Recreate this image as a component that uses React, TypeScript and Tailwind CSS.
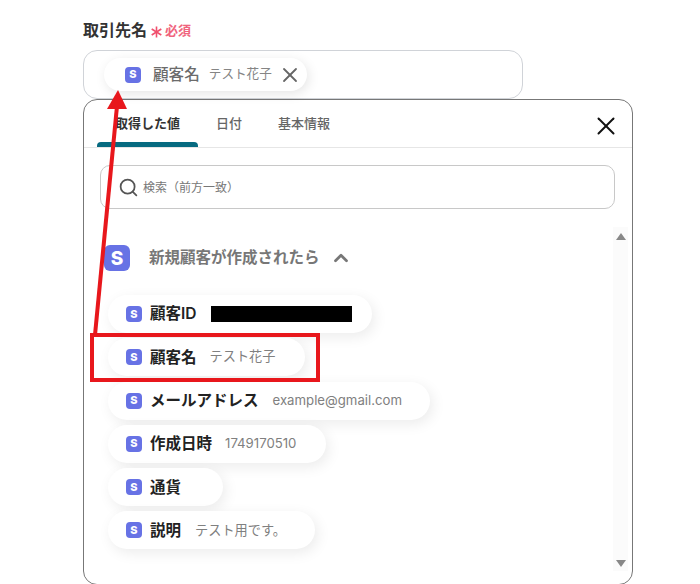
import { ChevronUp, Search, X } from "lucide-react";

const SBadge = ({ size = "small" }: { size?: "small" | "large" }) => {
  if (size === "large") {
    return (
      <span className="flex h-[26px] w-[26px] shrink-0 items-center justify-center rounded-[6px] bg-[#6772e5] text-[19px] font-extrabold leading-none text-white">
        S
      </span>
    );
  }
  return (
    <span className="flex h-4 w-4 shrink-0 items-center justify-center rounded-[4px] bg-[#6772e5] text-[11px] font-extrabold leading-none text-white">
      S
    </span>
  );
};

const rows = [
  { name: "顧客ID", width: "w-[264px]", gap: "ml-0" },
  { name: "顧客名", value: "テスト花子", width: "w-[197px]", gap: "ml-[13px]" },
  { name: "メールアドレス", value: "example@gmail.com", width: "w-[322px]", gap: "ml-[14px]" },
  { name: "作成日時", value: "1749170510", width: "w-[218px]", gap: "ml-[13px]" },
  { name: "通貨", width: "w-[115px]", gap: "ml-0" },
  { name: "説明", value: "テスト用です。", width: "w-[207px]", gap: "ml-[14px]" },
];

const App = () => {
  return (
    <div className="relative h-[584px] w-[700px] overflow-hidden bg-white pl-[83px] font-['Inter','Noto_Sans_CJK_JP',sans-serif] text-[#222]">
      <div className="flex h-[50px] items-start pt-[20px]">
        <span className="text-[16px] font-semibold leading-[20px] text-[#333]">取引先名</span>
        <svg className="ml-[4px] mt-[6px]" width="11" height="12" viewBox="0 0 11 12" stroke="#f0506e" strokeWidth="1.6">
          <line x1="5.5" y1="0.5" x2="5.5" y2="11.5" />
          <line x1="0.7" y1="3" x2="10.3" y2="9" />
          <line x1="10.3" y1="3" x2="0.7" y2="9" />
        </svg>
        <span className="ml-[3px] text-[13px] font-semibold leading-[20px] text-[#f0647d]">必須</span>
      </div>

      <div className="flex h-[49px] w-[440px] items-center rounded-[14px] border border-[#d0d3d8] pl-5">
        <div className="flex h-[33px] w-[203px] items-center rounded-full bg-white pl-[21px] shadow-[2px_3px_12px_rgba(0,0,0,0.1)]">
          <SBadge />
          <span className="ml-[12px] text-[15.6px] font-medium text-[#6b6b6b]">顧客名</span>
          <span className="ml-[9px] text-[12.6px] text-[#858585]">テスト花子</span>
          <X className="ml-[6px] h-[24px] w-[24px] shrink-0 text-[#666]" strokeWidth={1.8} />
        </div>
      </div>

      <div className="h-[486px] w-[550px] rounded-[14px] border border-[#777] bg-white">
        <div className="flex h-[48px] items-stretch border-b border-[#e6e6e6] pl-[13px] pr-[11px]">
          <div className="relative flex w-[101px] items-center justify-center text-[13px] font-semibold text-[#333]">
            取得した値
            <span className="absolute inset-x-0 bottom-0 h-[5px] rounded-t-[4px] bg-[#066a80]" />
          </div>
          <div className="ml-[18px] flex items-center text-[13px] font-medium text-[#666]">日付</div>
          <div className="ml-[36px] flex items-center text-[13px] font-medium text-[#666]">基本情報</div>
          <X className="ml-auto mt-[11px] h-[30px] w-[30px] text-[#111]" strokeWidth={1.6} />
        </div>

        <div className="ml-4 mt-[17px] flex h-[44px] w-[515px] items-center rounded-[10px] border border-[#c8c8c8] pl-[17px]">
          <Search className="h-[21px] w-[21px] shrink-0 text-[#555]" strokeWidth={2} />
          <span className="ml-[4px] pt-[1px] text-[12px] text-[#777]">検索（前方一致）</span>
        </div>

        <div className="relative">
          <div className="pl-[20px] pt-[36px]">
            <div className="flex h-[26px] items-center">
              <SBadge size="large" />
              <span className="ml-[19px] text-[15.5px] font-semibold text-[#777]">新規顧客が作成されたら</span>
              <ChevronUp className="ml-[10px] h-[22px] w-[22px] text-[#777]" strokeWidth={3} />
            </div>
            <div className="ml-[4px] mt-[24px] flex flex-col gap-[5.3px]">
              {rows.map((row) => (
                <div
                  key={row.name}
                  className={`flex h-[38px] items-center rounded-full bg-white pl-[18px] shadow-[3px_4px_14px_rgba(0,0,0,0.08)] ${row.width}`}
                >
                  <SBadge />
                  <span className="ml-[8px] text-[15.5px] font-semibold text-[#222]">{row.name}</span>
                  {row.value && <span className={`text-[13.2px] text-[#808080] ${row.gap}`}>{row.value}</span>}
                  {row.name === "顧客ID" && <span className="ml-[14px] h-4 w-[141px] bg-black" />}
                </div>
              ))}
            </div>
          </div>
          <div className="absolute right-[4px] top-[18px] flex h-[344px] w-[15px] flex-col items-center justify-between bg-[#fbfbfb] pb-[4px] pt-[6px]">
            <span className="h-0 w-0 border-x-[5px] border-b-[7px] border-x-transparent border-b-[#888]" />
            <span className="h-0 w-0 border-x-[5px] border-t-[7px] border-x-transparent border-t-[#888]" />
          </div>
        </div>
      </div>

      {/* red callout */}
      <div className="absolute left-[90px] top-[333px] h-[49px] w-[230px] border-[4px] border-[#e8171c]" />
      <svg className="absolute left-0 top-0" width="700" height="584" viewBox="0 0 700 584">
        <line x1="95" y1="335" x2="117" y2="106" stroke="#e8171c" strokeWidth="4" />
        <polygon points="118,90 107,109 127,109" fill="#e8171c" />
      </svg>
    </div>
  );
};

export default App;
